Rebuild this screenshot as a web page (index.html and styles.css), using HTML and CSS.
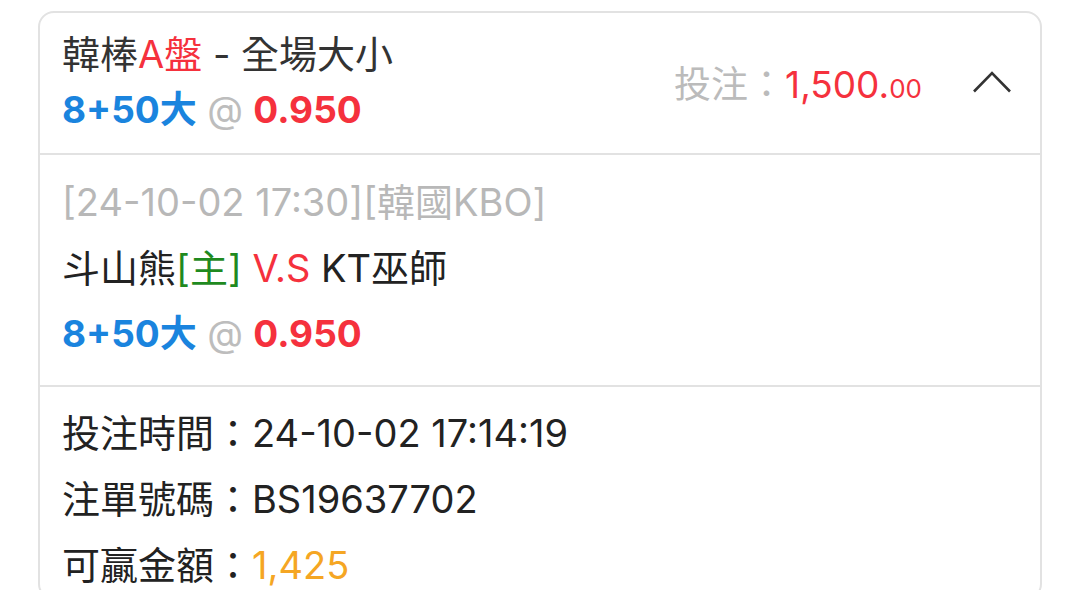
FILE: index.html
```html
<!DOCTYPE html>
<html lang="zh-Hant">
<head>
    <meta charset="UTF-8">
    <meta name="viewport" content="width=device-width, initial-scale=1.0">
    <title>注單詳情</title>
    <link rel="stylesheet" href="styles.css">
</head>
<body>
    <div class="bet-card">
        <div class="bet-head">
            <div class="head-info">
                <div class="league-line">韓棒<span class="red">A盤</span> - 全場大小</div>
                <div class="odds-line">
                    <span class="pick">8+50大</span>
                    <span class="at">@</span>
                    <span class="odds">0.950</span>
                </div>
            </div>
            <div class="stake">
                <span class="stake-label">投注：</span><span class="stake-amount">1,500.<small>00</small></span>
            </div>
            <svg class="chevron" width="40" height="22" viewBox="0 0 40 22">
                <polyline points="2,20.5 20,2 38,20.5" fill="none" stroke="#333" stroke-width="2.6" stroke-linejoin="miter"/>
            </svg>
        </div>

        <div class="bet-match">
            <div class="match-time">[24-10-02 17:30][韓國KBO]</div>
            <div class="match-teams">斗山熊<span class="home">[主]</span> <span class="red">V.S</span> KT巫師</div>
            <div class="odds-line">
                <span class="pick">8+50大</span>
                <span class="at">@</span>
                <span class="odds">0.950</span>
            </div>
        </div>

        <div class="bet-detail">
            <div class="detail-row">投注時間：24-10-02 17:14:19</div>
            <div class="detail-row">注單號碼：BS19637702</div>
            <div class="detail-row">可贏金額：<span class="win">1,425</span></div>
        </div>
    </div>
</body>
</html>
```

FILE: styles.css
```css
/* Page */
body {
    margin: 0;
    padding: 11px 38px 0 38px;
    background: #fff;
    font-family: "Inter", "Noto Sans CJK TC", sans-serif;
    color: #333;
    font-size: 38px;
}

/* Card */
.bet-card {
    border: 2px solid #e2e2e2;
    border-radius: 16px;
    background: #fff;
}

.red {
    color: #f5313d;
}

/* Header */
.bet-head {
    display: flex;
    align-items: center;
    padding: 14px 28px 16px 22px;
    border-bottom: 2px solid #e2e2e2;
}

.head-info {
    flex: 1;
}

.league-line {
    line-height: 55px;
    color: #333;
}

.odds-line {
    line-height: 55px;
    font-size: 37px;
}

.pick {
    color: #1a84de;
    font-weight: 700;
}

.at {
    color: #bdbdbd;
}

.odds {
    color: #f5313d;
    font-weight: 700;
}

.stake {
    margin-right: 50px;
    font-size: 37px;
}

.stake-label {
    color: #bbb;
}

.stake-amount {
    color: #f5313d;
}

.stake-amount small {
    font-size: 26px;
}

.chevron {
    display: block;
}

/* Match block */
.bet-match {
    padding: 14px 22px 18px;
    border-bottom: 2px solid #e2e2e2;
}

.bet-match > div {
    line-height: 66px;
}

.match-time {
    color: #b8b8b8;
}

.match-teams {
    color: #222;
}

.home {
    color: #1f8a1f;
}

/* Details */
.bet-detail {
    padding: 13px 22px 0;
}

.detail-row {
    line-height: 66px;
    color: #222;
}

.win {
    color: #f5a623;
}
```
